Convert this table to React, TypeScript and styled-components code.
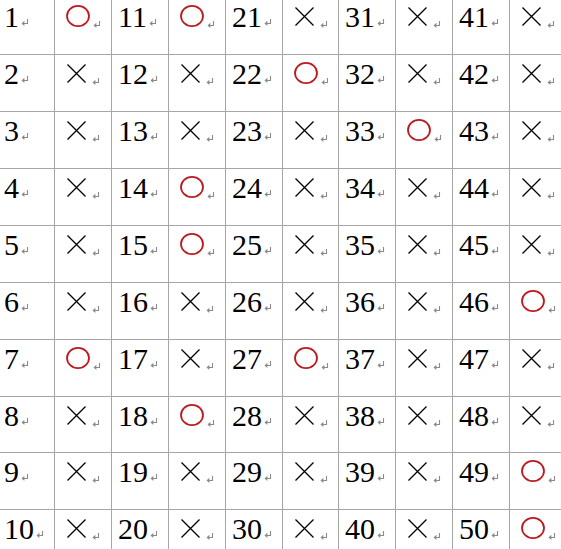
import React from 'react'
import styled, { createGlobalStyle } from 'styled-components'

const GlobalStyle = createGlobalStyle`
  html, body {
    margin: 0;
    padding: 0;
    background: #fff;
    overflow: hidden;
  }
`

const Sheet = styled.div`
  display: grid;
  grid-template-columns: 57px 57px 57px 57px 57px 56px 57px 57px 57px 57px;
  grid-template-rows: repeat(7, 57px) 56px 57px 57px;
  margin: -2px 0 0 -2px;
  width: max-content;
`

const Cell = styled.div`
  display: flex;
  align-items: flex-start;
  box-sizing: border-box;
  padding-left: 6px;
  border-right: 1px solid #a6a6a6;
  border-bottom: 1px solid #a6a6a6;
  background: #fff;
`

const Num = styled.span`
  font-family: 'Liberation Serif', 'Times New Roman', serif;
  font-size: 30px;
  line-height: 1;
  color: #000;
  margin-top: 4px;
`

const MarkSvg = styled.svg<{ $kind: 'o' | 'x' }>`
  flex: none;
  margin-left: ${(p) => (p.$kind === 'x' ? 6 : 5)}px;
  margin-top: ${(p) => (p.$kind === 'x' ? 9 : 7)}px;
`

const Para = styled.svg<{ $after: 'num' | 'o' | 'x' }>`
  flex: none;
  margin-left: ${(p) => (p.$after === 'num' ? 2 : p.$after === 'x' ? 6 : 3)}px;
  margin-top: ${(p) => (p.$after === 'num' ? 20 : 22)}px;
`

const ParaMark = ({ after }: { after: 'num' | 'o' | 'x' }) => (
  <Para $after={after} width="8" height="8" viewBox="0 0 8 8">
    <path d="M6.5 1 V5.5 H2.5" fill="none" stroke="#8a8a8a" strokeWidth="1.1" />
    <path d="M0.5 5.5 L3.4 2.8 V8 Z" fill="#8a8a8a" />
  </Para>
)

const Mark = ({ kind }: { kind: 'o' | 'x' }) =>
  kind === 'x' ? (
    <MarkSvg $kind="x" width="19" height="19" viewBox="0 0 19 19">
      <path d="M0.5 0.5 L18.5 18.5 M18.5 0.5 L0.5 18.5" stroke="#000" strokeWidth="1.3" />
    </MarkSvg>
  ) : (
    <MarkSvg $kind="o" width="24" height="22" viewBox="0 0 24 22">
      <ellipse cx="12" cy="11" rx="11" ry="10.1" fill="none" stroke="#bb1a1f" strokeWidth="1.8" />
    </MarkSvg>
  )

// numbers that got a circle, the rest are crosses
const circled = new Set([1, 7, 11, 14, 15, 18, 22, 27, 33, 46, 49, 50])

export default function App() {
  const rows = Array.from({ length: 10 }, (_, r) => r)
  const groups = [0, 1, 2, 3, 4]

  return (
    <>
      <GlobalStyle />
      <Sheet>
        {rows.map((r) =>
          groups.map((g) => {
            const n = g * 10 + r + 1
            const kind = circled.has(n) ? 'o' : 'x'
            return (
              <React.Fragment key={n}>
                <Cell>
                  <Num>{n}</Num>
                  <ParaMark after="num" />
                </Cell>
                <Cell>
                  <Mark kind={kind} />
                  <ParaMark after={kind} />
                </Cell>
              </React.Fragment>
            )
          })
        )}
      </Sheet>
    </>
  )
}
